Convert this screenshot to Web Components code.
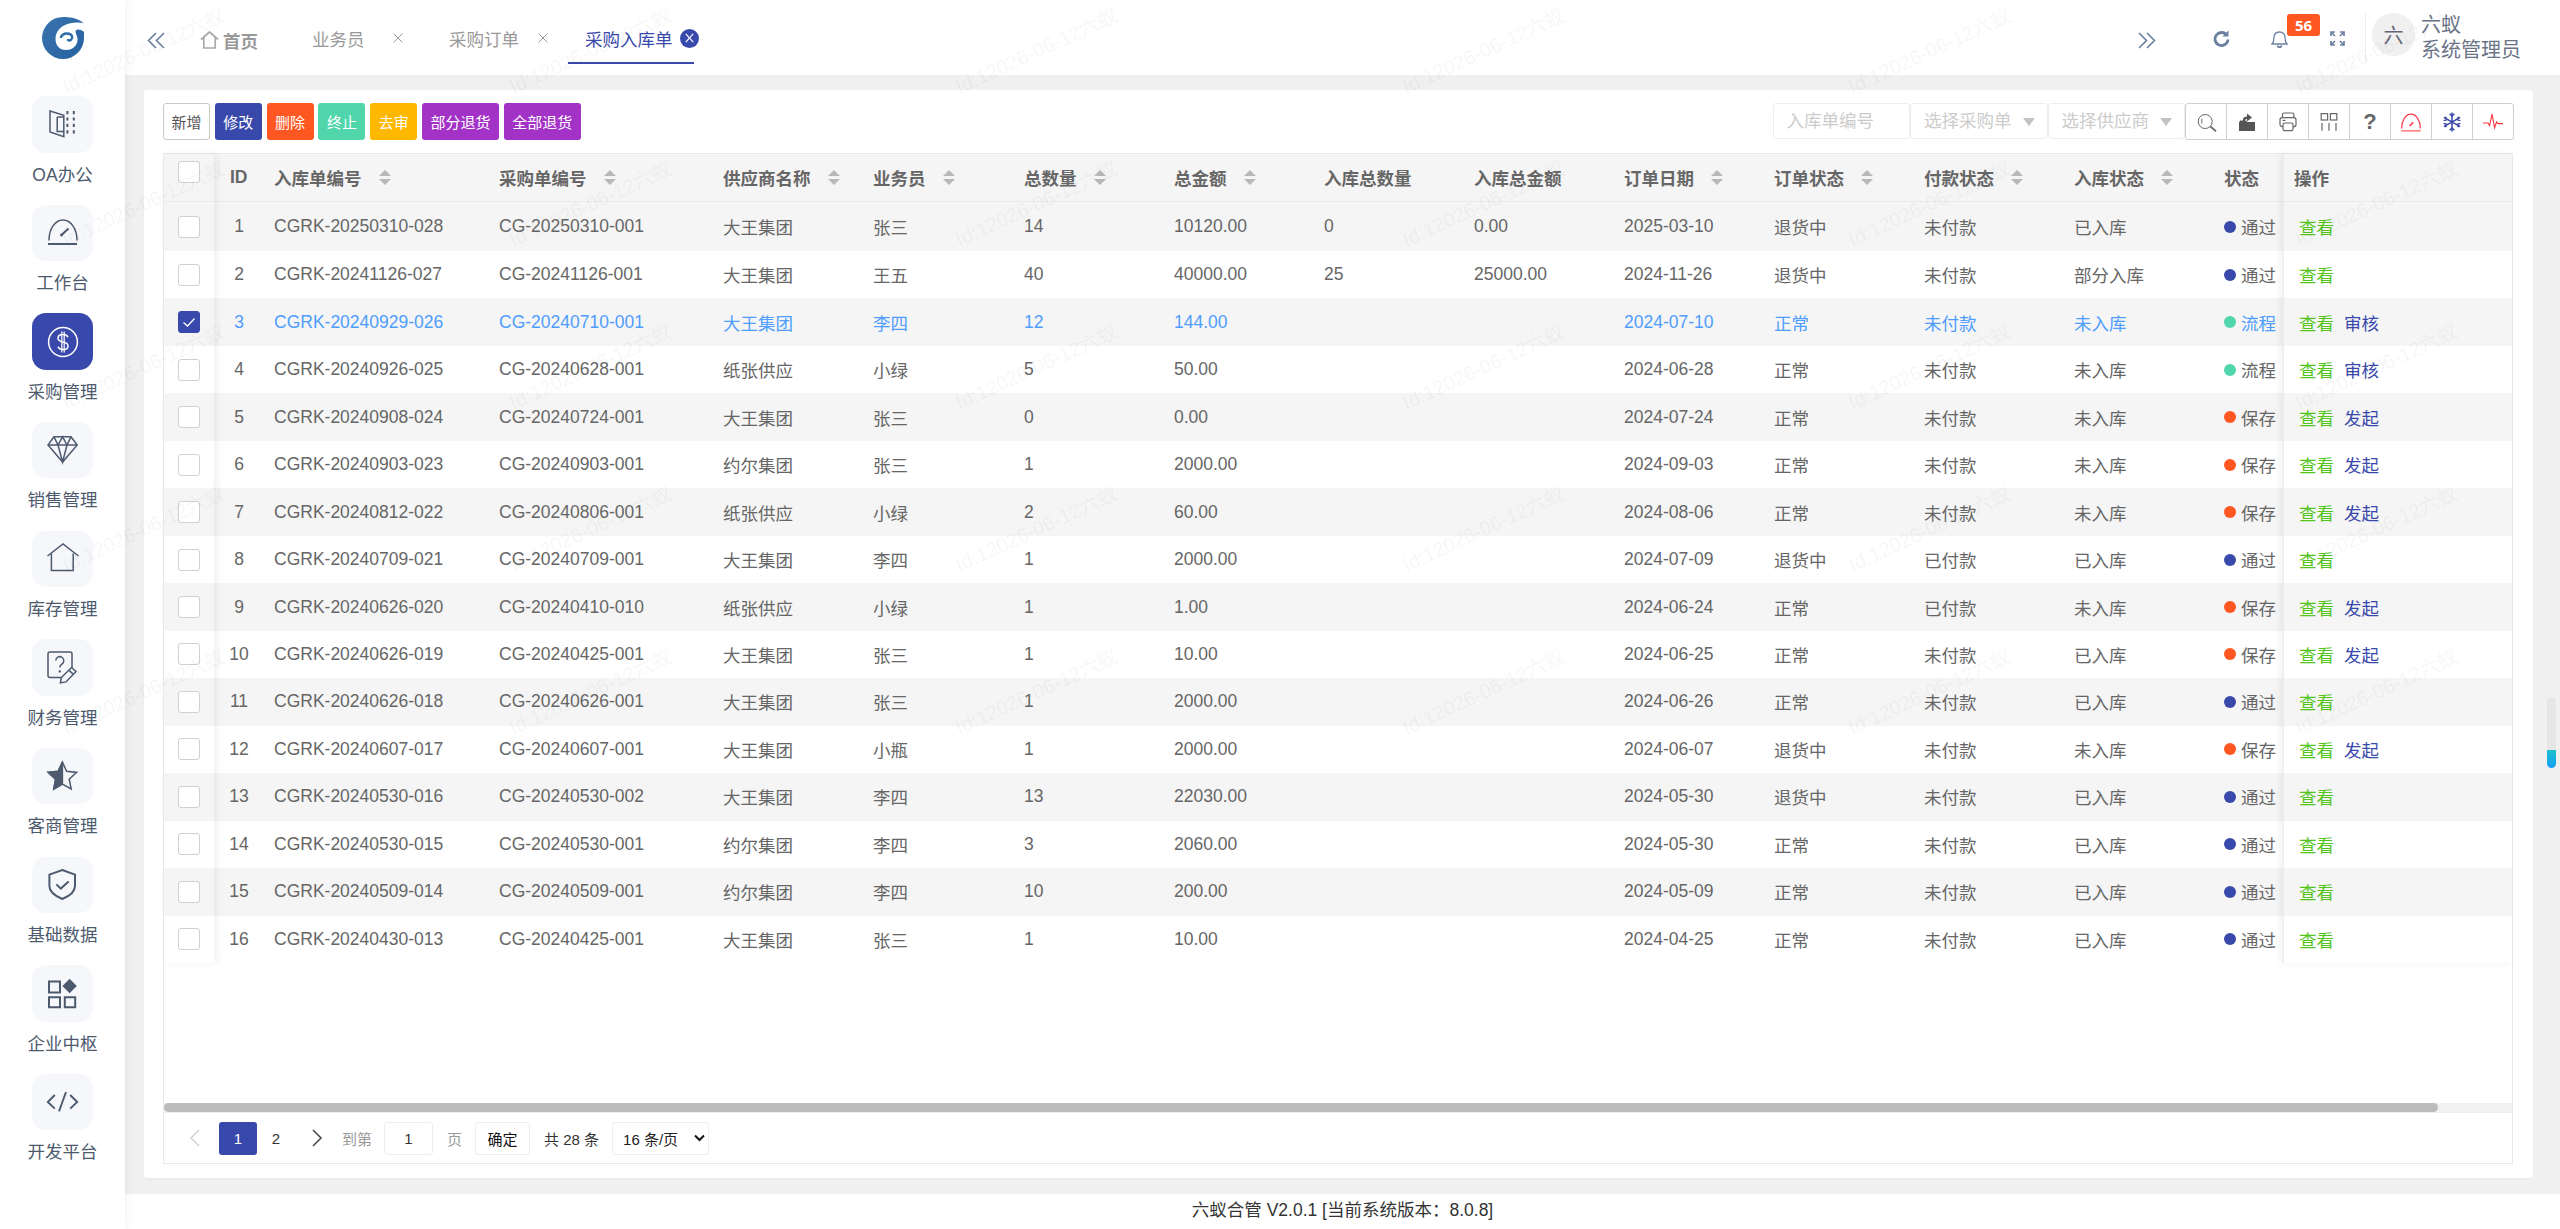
<!DOCTYPE html>
<html lang="zh-CN">
<head>
<meta charset="utf-8">
<title>采购入库单</title>
<style>
  html, body { margin: 0; height: 100%; overflow: hidden; background: #f0f0f0; }
  body { font-family: "Liberation Sans", "Noto Sans CJK SC", sans-serif; color: #666; }
</style>
</head>
<body>
<lx-shell>
  <lx-sidebar slot="side">
    <lx-nav-item icon="oa" label="OA办公"></lx-nav-item>
    <lx-nav-item icon="gauge" label="工作台"></lx-nav-item>
    <lx-nav-item icon="dollar" label="采购管理" active></lx-nav-item>
    <lx-nav-item icon="gem" label="销售管理"></lx-nav-item>
    <lx-nav-item icon="home" label="库存管理"></lx-nav-item>
    <lx-nav-item icon="doc" label="财务管理"></lx-nav-item>
    <lx-nav-item icon="star" label="客商管理"></lx-nav-item>
    <lx-nav-item icon="shield" label="基础数据"></lx-nav-item>
    <lx-nav-item icon="apps" label="企业中枢"></lx-nav-item>
    <lx-nav-item icon="code" label="开发平台"></lx-nav-item>
  </lx-sidebar>
  <lx-topbar slot="top"></lx-topbar>
  <lx-card>
    <lx-toolbar></lx-toolbar>
    <lx-table id="tabla"></lx-table>
  </lx-card>
  <lx-footer slot="foot">六蚁合管 V2.0.1 [当前系统版本：8.0.8]</lx-footer>
</lx-shell>
<lx-scroll-widget></lx-scroll-widget>
<lx-watermark></lx-watermark>

<script>
// iconos de la barra lateral, caja de 32x32
const NAV_ICONS = {
  oa: `<path d="M3 3l13.8 4.2v21.5L3 24z"/><path d="M10.2 9v14.6h6.6"/><path d="M10.2 9h6.6"/><path d="M20.4 3v25M26.8 3v25" stroke-dasharray="3.2 3.2" stroke-width="2"/>`,
  gauge: `<path d="M2 23.4C2 12 8 3 16 3s14 9 14 20.4" /><path d="M1 27h29" stroke-width="2"/><path d="M14.5 18l7-6.5" stroke-width="2"/><circle cx="14.5" cy="18" r="1.4" fill="currentColor" stroke="none"/>`,
  dollar: `<circle cx="16" cy="16" r="14.4"/><path d="M21 11.3c-.8-1.8-2.6-2.8-5-2.8-3 0-5 1.5-5 3.7 0 2.3 2 3.2 5 3.8 3 .6 5 1.6 5 3.9 0 2.2-2 3.7-5 3.7-2.4 0-4.2-1-5-2.8"/><path d="M14.800 5.500v21M17.200 5.500v21" stroke-width="1.200"/>`,
  gem: `<path d="M7 2.800h17L30.200 11 15.600 28 1 11z"/><path d="M1 11h29.200M7 2.800 11 11l4.600 17L20 11l4-8.200M11 11l4.600-8.200L20 11"/>`,
  home: `<path d="M.5 13 16 1l15.500 12"/><path d="M4.400 10.500V27.500h21.800V10.500"/>`,
  doc: `<path d="M14 25.400H3a2 2 0 0 1-2-2V2a2 2 0 0 1 2-2h20a2 2 0 0 1 2 2v14"/><path d="M8.800 8.600a4 4 0 1 1 6.200 3.400c-1.500 1-2.200 1.800-2.200 3.600"/><circle cx="12.800" cy="19.400" r="1.200" fill="currentColor" stroke="none"/><path d="M24.500 15.500l4.500 4-10 10.400-5.600 1 1-5.400z"/><path d="M22 18.400l4.500 4"/>`,
  star: `<path d="M15.400 2l4.200 9.200 10 1.200-7.400 6.800 2 9.800-8.800-5-8.600 5 1.800-9.800-7.400-6.800 10-1.200z" /><path d="M15.400 2l-4.200 9.200-10 1.200 7.400 6.800-1.800 9.800 8.600-5z" fill="currentColor"/>`,
  shield: `<path d="M15.300 1 28 5.600V17c0 5.800-4.600 9.600-12.700 13C7.200 26.600 2.400 22.800 2.400 17V5.600z" stroke-width="2"/><path d="M9.400 15.400l4.400 4.200 7.800-7.200" stroke-width="2"/>`,
  apps: `<path d="M2 3.500h11v11H2zM2 19.300h11v10H2zM17.800 19.300h10.400v10H17.800z" stroke-width="2"/><path d="M22.600.8 29.800 8l-7.200 7.200L15.400 8z" fill="currentColor" stroke="none"/>`,
  code: `<path d="M7.800 9 .8 16l7 6.600M23.200 9l7 7-7 6.600M19 6l-7 19.400" stroke-width="1.900"/>`
};

// iconos del grupo de herramientas, caja de 22x22
const TOOL_ICONS = [
  `<g fill="none" stroke="#666" stroke-width="1"><circle cx="10.200" cy="10.500" r="7"/><path d="M6.800 7.600v5" stroke-width=".9"/><path d="M15.500 15.500l5.500 4.800" stroke-width="1.700"/></g>`,
  `<path d="M3 11h16v9H3z" fill="#565656"/><path d="M3 12.200V20h15.800v-8.200h-7L10 9.600H4z" fill="#565656"/><path d="M7 11V8.400c0-2 1.600-3 4-3V2.600l5 4-5 4V8c-1.800 0-2 1-2 3z" fill="#565656"/>`,
  `<g fill="none" stroke="#666" stroke-width="1.200"><path d="M5.500 6.400V3.600c0-1 .6-1.600 1.600-1.600h8.200c1 0 1.600.6 1.600 1.600v2.800"/><rect x="3" y="6.600" width="16" height="9" rx="2.200" /><rect x="6" y="12" width="10" height="7.600" rx="1.600" fill="#fff"/><path d="M5.500 9.400h3" /></g>`,
  `<g fill="none" stroke="#666" stroke-width="1.200"><rect x="3.200" y="2.600" width="6.400" height="6.400"/><rect x="12.400" y="2.600" width="6.400" height="6.400"/><path d="M4 12v7.800M11 12v7.800M18 12v7.800"/></g>`,
  null,
  `<g fill="none" stroke="#ff3c4e" stroke-width="1.200"><path d="M1.600 17.400C1.600 9.600 5.600 3.200 11 3.200s9.400 6.400 9.400 14.200"/><path d="M1.200 19.800h19.600" stroke="#ff8a8a" stroke-width="1.800"/><path d="M9.600 15l3.600-3.600" stroke-width="1.600"/></g>`,
  `<g fill="none" stroke="#3949ab" stroke-width="1.500"><path d="M11 1.600v18.800M2.800 6.300l16.400 9.400M19.200 6.300 2.800 15.700"/><path d="M8.600 2.800l2.400 2.200 2.400-2.200M8.600 19.200l2.400-2.200 2.400 2.200M2.600 9.600l3-.8-1-3M19.400 9.600l-3-.8 1-3M2.600 12.400l3 .8-1 3M19.400 12.400l-3 .8 1 3"/></g>`,
  `<path d="M1 12h5l1.600 2.600L10 3.200l2.600 13.600 2-6 1.600 1.800h4.800" fill="none" stroke="#f5323c" stroke-width="1.100"/>`
];

const css_base = `* { box-sizing: border-box; } :host { box-sizing: border-box; }`;

class LxShell extends HTMLElement {
  constructor() {
    super();
    this.attachShadow({ mode: 'open' });
    this.shadowRoot.innerHTML = `
      <style>
        ${css_base}
        :host { display: flex; height: 1229px; width: 2560px; }
        main { flex: 1; min-width: 0; display: flex; flex-direction: column; }
        .contenido { flex: 1; min-height: 0; display: flex; padding: 15px 27px 16px 19px; background: #f0f0f0; }
      </style>
      <slot name="side"></slot>
      <main>
        <slot name="top"></slot>
        <div class="contenido"><slot></slot></div>
        <slot name="foot"></slot>
      </main>`;
  }
}

class LxSidebar extends HTMLElement {
  constructor() {
    super();
    this.attachShadow({ mode: 'open' });
    this.shadowRoot.innerHTML = `
      <style>
        ${css_base}
        :host { display: block; width: 125px; flex: none; background: #fff; box-shadow: 2px 0 8px rgba(0,0,0,.05); position: relative; z-index: 2; }
        .logo { height: 96px; padding-top: 17px; display: flex; justify-content: center; }
        svg { width: 42px; height: 42px; display: block; }
      </style>
      <div class="logo">
        <svg viewBox="0 0 42 42">
          <defs><linearGradient id="g" x1="0" y1="0" x2="1" y2="1"><stop offset="0" stop-color="#3a75b0"/><stop offset="1" stop-color="#26609f"/></linearGradient></defs>
          <path d="M21 0C30 0 37 2 42 6.500L42 21A21 21 0 1 1 21 0z" fill="url(#g)"/>
          <path d="M43 6.500C32 3.500 17 7 14 18 12 26 16 33 24 33c7 0 12-5 11.500-11C35 17 31 13 36 12.500c2 0 5 1 7 3.500z" fill="#fff"/>
          <path d="M19 20C21 15.500 28 15.500 30 19 31 22 28 24.500 26 23" fill="none" stroke="#2f6ca8" stroke-width="2.400" stroke-linecap="round"/>
        </svg>
      </div>
      <slot></slot>`;
  }
}

class LxNavItem extends HTMLElement {
  connectedCallback() {
    if (this.shadowRoot) return;
    this.attachShadow({ mode: 'open' });
    const activo = this.hasAttribute('active');
    this.shadowRoot.innerHTML = `
      <style>
        ${css_base}
        :host { display: block; height: 108.670px; }
        .tile { width: 61px; height: 56.500px; margin: 0 auto; border-radius: 14px; background: ${activo ? '#3949ab' : '#f5f7fb'};
                color: ${activo ? '#fff' : '#4d5a6e'}; display: flex; align-items: center; justify-content: center; }
        svg { width: 32px; height: 32px; overflow: visible; fill: none; stroke: currentColor; stroke-width: 1.500; }
        .label { margin-top: 10px; height: 24px; line-height: 24px; text-align: center; font-size: 17.500px; color: #4d5a6e; white-space: nowrap; }
      </style>
      <div class="tile"><svg viewBox="0 0 32 32">${NAV_ICONS[this.getAttribute('icon')]}</svg></div>
      <div class="label">${this.getAttribute('label')}</div>`;
  }
}

class LxTopbar extends HTMLElement {
  constructor() {
    super();
    this.attachShadow({ mode: 'open' });
    const aspa = `<svg width="10" height="10" viewBox="0 0 10 10" stroke="#999" stroke-width="1"><path d="M.5.5l9 9M9.500.5l-9 9"/></svg>`;
    this.shadowRoot.innerHTML = `
      <style>
        ${css_base}
        :host { display: flex; align-items: flex-start; height: 75px; background: #fff; font-size: 17.500px; flex: none; }
        svg { display: block; fill: none; flex: none; }
        .fold { stroke: #6b80a0; stroke-width: 1.600; width: 19px; height: 17px; margin-top: 32px; }
        .home { display: flex; align-items: center; height: 20px; margin: 30px 0 0 34px; width: 95px; flex: none; font-weight: 700; color: #999; gap: 4px; }
        .home svg { stroke: #aaa; stroke-width: 1.700; width: 19px; height: 20px; }
        .tab { display: flex; align-items: center; height: 47px; margin-top: 17px; padding: 0 0 3px 17px; border-bottom: 2px solid transparent; color: #999; flex: none; white-space: nowrap; }
        .tab.on { color: #3949ab; border-color: #3949ab; width: 126px; }
        .cerrar { width: 19px; height: 19px; margin-left: 7px; flex: none; background: #3949ab; border-radius: 50%; display: flex; align-items: center; justify-content: center; }
        .der { margin-left: auto; display: flex; align-items: flex-start; height: 75px; padding-right: 39px; }
        .der svg { stroke: #6b80a0; }
        .bell { position: relative; margin: 30px 0 0 41px; width: 17px; height: 18px; }
        .badge { position: absolute; left: 16px; top: -16px; width: 33px; height: 22px; background: #ff5722; border-radius: 3px; color: #fff; font: 700 15px/22px "Noto Sans", sans-serif; text-align: center; }
        .vr { width: 1px; height: 50px; background: #eee; margin: 13px 0 0 20px; }
        .avatar { width: 43px; height: 43px; border-radius: 50%; background: #f0f0f0; margin: 13px 0 0 6px; color: #667; font-size: 20px; display: flex; align-items: center; justify-content: center; }
        .nombre { margin: 13px 0 0 6px; font-size: 20px; line-height: 25px; color: #6a7487; white-space: nowrap; }
      </style>
      <svg class="fold" style="margin-left:22px" viewBox="0 0 19 17"><path d="M9 1 1.500 8.500 9 16M17 1 9.500 8.500 17 16"/></svg>
      <div class="home"><svg viewBox="0 0 19 20"><path d="M1 9.500 9.500 2 18 9.500M3.800 7.500V18h11.400V7.500"/></svg><span>首页</span></div>
      <div class="tab" style="width:137px"><span>业务员</span><span style="margin-left:28px">${aspa}</span></div>
      <div class="tab" style="width:136px"><span>采购订单</span><span style="margin-left:19px">${aspa}</span></div>
      <div class="tab on"><span>采购入库单</span><span class="cerrar"><svg width="9" height="10" viewBox="0 0 9 10" stroke="#fff" stroke-width="1.200"><path d="M.8.8l7.400 8.400M8.200.8.8 9.200"/></svg></span></div>
      <div class="der">
        <svg class="fold" viewBox="0 0 19 17"><path d="M2 1l7.500 7.500L2 16M10 1l7.500 7.500L10 16"/></svg>
        <svg style="margin:30px 0 0 57px;stroke-width:2.800" width="17" height="17" viewBox="0 0 17 17"><path d="M14 5.500A6.500 6.500 0 1 0 15 9.500"/><path d="M15.500 .5v6h-6z" fill="#6b80a0" stroke="none"/></svg>
        <div class="bell"><svg width="17" height="18" viewBox="0 0 17 18" style="stroke-width:1.300"><path d="M1 14h15c-1.500-1.500-2-3-2-6.500C14 4 11.800 2 8.500 2S3 4 3 7.500C3 11 2.500 12.500 1 14z"/><path d="M6.500 15.500c.3 1.300 1 1.800 2 1.800s1.700-.5 2-1.800" stroke-width="1.800"/></svg><span class="badge">56</span></div>
        <svg style="margin:31px 0 0 42px;stroke-width:1.700" width="15" height="15" viewBox="0 0 15 15"><path d="M1 5V1h4M10 1h4v4M14 10v4h-4M5 14H1v-4M1.500 1.500 5 5M13.500 1.500 10 5M13.500 13.500 10 10M1.500 13.500 5 10"/></svg>
        <div class="vr"></div>
        <div class="avatar">六</div>
        <div class="nombre">六蚁<br>系统管理员</div>
      </div>`;
  }
}

class LxCard extends HTMLElement {
  constructor() {
    super();
    this.attachShadow({ mode: 'open' });
    this.shadowRoot.innerHTML = `
      <style>
        ${css_base}
        :host { flex: 1; min-width: 0; display: flex; flex-direction: column; gap: 13px; padding: 13px 20px 14px 19px; background: #fff; border-radius: 3px; box-shadow: 0 1px 2px rgba(0,0,0,.04); }
      </style>
      <slot></slot>`;
  }
}

class LxToolbar extends HTMLElement {
  constructor() {
    super();
    this.attachShadow({ mode: 'open' });
    const botones = [['新增', 'blanco'], ['修改', '#3949ab'], ['删除', '#ff5722'], ['终止', '#51d5ab'], ['去审', '#ffb800'], ['部分退货', '#a233c6'], ['全部退货', '#a233c6']];
    const btnHtml = botones.map(([t, c]) => c === 'blanco'
      ? `<button class="blanco">${t}</button>`
      : `<button style="background:${c}">${t}</button>`).join('');
    const herramientas = TOOL_ICONS.map(s => s
      ? `<div class="cell"><svg width="22" height="22" viewBox="0 0 22 22">${s}</svg></div>`
      : `<div class="cell q">?</div>`).join('');
    this.shadowRoot.innerHTML = `
      <style>
        ${css_base}
        :host { display: flex; height: 37px; flex: none; margin-right: -1px; }
        .izq { display: flex; gap: 4.800px; }
        button { height: 37px; width: 47px; padding: 0; border: 0; border-radius: 3px; color: #fff; font: 15px "Liberation Sans", "Noto Sans CJK SC", sans-serif; white-space: nowrap; }
        button:nth-child(n+6) { width: 77px; }
        button.blanco { background: #fff; border: 1px solid #c9c9c9; color: #555; }
        .der { margin-left: auto; display: flex; }
        .campo { width: 137.500px; height: 36px; border: 1px solid #eee; border-radius: 3px; padding-left: 13px; font-size: 17.500px; line-height: 34px; color: #ccc; position: relative; white-space: nowrap; }
        .campo.sel::after { content: ""; position: absolute; right: 12px; top: 14px; border: 6.500px solid transparent; border-top: 8px solid #c2c2c2; border-bottom: 0; }
        .grupo { display: flex; height: 37px; border: 1px solid #cfcfcf; border-radius: 3px; }
        .cell { width: 41px; display: flex; align-items: center; justify-content: center; border-left: 1px solid #cfcfcf; }
        .cell:first-child { border-left: 0; width: 40px; }
        .q { font: 700 22px "Liberation Sans", sans-serif; color: #666; }
      </style>
      <div class="izq">${btnHtml}</div>
      <div class="der">
        <div class="campo">入库单编号</div>
        <div class="campo sel">选择采购单</div>
        <div class="campo sel">选择供应商</div>
        <div class="grupo">${herramientas}</div>
      </div>`;
  }
}

class LxTable extends HTMLElement {
  constructor() {
    super();
    this.attachShadow({ mode: 'open' });
    this._filas = [];
  }

  set data(filas) {
    this._filas = filas;
    this.render();
  }

  render() {
    const cols = [
      ['ID', 50], ['入库单编号', 225, 's'], ['采购单编号', 224, 's'], ['供应商名称', 150, 's'], ['业务员', 151, 's'],
      ['总数量', 150, 's'], ['总金额', 150, 's'], ['入库总数量', 150], ['入库总金额', 150], ['订单日期', 150, 's'],
      ['订单状态', 150, 's'], ['付款状态', 150, 's'], ['入库状态', 150, 's'], ['状态', 150]
    ];
    const plantilla = cols.map(c => c[1] + 'px').join(' ');
    const puntos = { '通过': '#3949ab', '流程': '#51d5ab', '保存': '#ff5722' };
    const flecha = `<i class="sort"></i>`;

    const cabecera = `<div class="fila head">${cols.map((c, i) =>
      `<div class="td${i === 0 ? ' id' : ''}"><span>${c[0]}</span>${c[2] ? flecha : ''}</div>`).join('')}</div>`;

    const filas = this._filas.map(f => {
      const celdas = [f.id, f.entrada, f.compra, f.proveedor, f.vendedor, f.cantidad, f.importe, f.cantEntrada, f.impEntrada, f.fecha, f.orden, f.pago, f.almacen];
      return `<div class="fila${f.sel ? ' sel' : ''}">${celdas.map((t, i) => `<div class="td${i === 0 ? ' id' : ''}">${t ?? ''}</div>`).join('')}
        <div class="td"><i class="dot" style="background:${puntos[f.estado]}"></i>${f.estado}</div></div>`;
    }).join('');

    const izq = this._filas.map(f => `<div class="fila"><i class="chk${f.sel ? ' on' : ''}">${f.sel ? '<svg width="14" height="14" viewBox="0 0 14 14"><path d="M1.500 7.500 5.500 11 12.500 3.500" fill="none" stroke="#fff" stroke-width="1.300"/></svg>' : ''}</i></div>`).join('');

    const der = this._filas.map(f => `<div class="fila"><div class="td ops"><a class="ver">查看</a>${f.accion ? `<a class="acc">${f.accion}</a>` : ''}</div></div>`).join('');

    this.shadowRoot.innerHTML = `
      <style>
        ${css_base}
        :host { flex: 1; min-height: 0; display: flex; flex-direction: column; border: 1px solid #e9e9e9; font-size: 17.500px; color: #666; }
        .cuerpo { flex: 1; min-height: 0; display: flex; align-items: flex-start; }
        .pane { flex: none; background: #fff; position: relative; z-index: 1; }
        .izq { width: 50px; box-shadow: 3px 0 7px rgba(0,0,0,.06); }
        .der { width: 229px; border-left: 1px solid #ececec; box-shadow: -3px 0 7px rgba(0,0,0,.06); }
        .centro { flex: 1; min-width: 0; overflow: hidden; }
        .fila { height: 47.470px; display: flex; align-items: center; background: #fff; }
        .centro .fila { display: grid; grid-template-columns: ${plantilla}; }
        .fila:nth-child(even) { background: #f5f5f5; }
        .fila:nth-child(2) { height: 49px; }
        .fila.head { height: 48px !important; background: #f5f5f5; border-bottom: 1px solid #eaeaea; font-weight: 700; }
        .td { padding-left: 10px; white-space: nowrap; display: flex; align-items: center; min-width: 0; }
        .td.id { justify-content: center; padding-left: 0; }
        .head .td.id { justify-content: flex-start; padding-left: 16px; }
        .sel { color: #4e9dff; }
        .dot { width: 12px; height: 12px; border-radius: 50%; margin-right: 5px; flex: none; }
        .sort { display: inline-block; width: 12px; height: 15px; margin-left: 17px; position: relative; flex: none; }
        .sort::before, .sort::after { content: ""; position: absolute; left: 0; border: 6px solid transparent; }
        .sort::before { top: 0; border-top: 0; border-bottom: 6.500px solid #b8b8b8; }
        .sort::after { bottom: 0; border-bottom: 0; border-top: 6.500px solid #b8b8b8; }
        .chk { display: block; width: 22px; height: 22px; margin-left: 14px; border: 1px solid #d0d0d0; border-radius: 3px; background: #fff; flex: none; }
        .chk.on { background: #3949ab; border-color: #3949ab; display: flex; align-items: center; justify-content: center; }
        .head .chk { margin-bottom: 11px; }
        .der .head .td { padding-left: 10px; }
        .ops { padding-left: 15px; gap: 10px; }
        .ver { color: #52c41a; }
        .acc { color: #3949ab; }
        .barra { height: 9px; flex: none; background: #f1f1f1; }
        .thumb { width: 2274px; height: 9px; background: #bcbcbc; border-radius: 5px; }
      </style>
      <div class="cuerpo">
        <div class="pane izq"><div class="fila head"><i class="chk"></i></div>${izq}</div>
        <div class="centro">${cabecera}${filas}</div>
        <div class="pane der"><div class="fila head"><div class="td">操作</div></div>${der}</div>
      </div>
      <div class="barra"><div class="thumb"></div></div>
      <lx-pager></lx-pager>`;
  }
}

class LxPager extends HTMLElement {
  constructor() {
    super();
    this.attachShadow({ mode: 'open' });
    this.shadowRoot.innerHTML = `
      <style>
        ${css_base}
        :host { display: flex; align-items: center; height: 51px; flex: none; border-top: 1px solid #eee; padding-left: 12px; font-size: 15px; color: #333; white-space: nowrap; }
        .p { width: 38px; height: 33px; display: flex; align-items: center; justify-content: center; flex: none; border-radius: 3px; }
        .on { background: #3949ab; color: #fff; }
        svg { fill: none; }
        .gris { color: #999; }
        .caja { height: 33px; border: 1px solid #eee; border-radius: 3px; display: flex; align-items: center; justify-content: center; background: #fff; }
      </style>
      <div class="p" style="margin-right:5px"><svg width="12" height="20" viewBox="0 0 12 20" stroke="#d2d2d2" stroke-width="1.500"><path d="M10 2 2 10l8 8"/></svg></div>
      <div class="p on">1</div>
      <div class="p">2</div>
      <div class="p" style="margin-left:3px"><svg width="12" height="20" viewBox="0 0 12 20" stroke="#444" stroke-width="1.500"><path d="M2 2l8 8-8 8"/></svg></div>
      <span class="gris" style="margin-left:6px">到第</span>
      <div class="caja" style="width:49px;margin-left:12px;color:#333">1</div>
      <span class="gris" style="margin-left:14px">页</span>
      <div class="caja" style="width:55px;margin-left:13px;color:#111">确定</div>
      <span style="margin-left:14px">共 28 条</span>
      <div class="caja" style="width:97px;margin-left:13px;color:#222;justify-content:flex-start;padding-left:10px;gap:16px">16 条/页<svg width="11" height="8" viewBox="0 0 11 8" stroke="#111" stroke-width="2"><path d="M1 1.500 5.500 6 10 1.500"/></svg></div>`;
  }
}

class LxFooter extends HTMLElement {
  constructor() {
    super();
    this.attachShadow({ mode: 'open' });
    this.shadowRoot.innerHTML = `
      <style>
        :host { display: block; height: 35px; flex: none; background: #fff; text-align: center; font-size: 17.500px; line-height: 33px; color: #333; }
      </style>
      <slot></slot>`;
  }
}

// marca de agua encima de toda la pagina, cinco filas como en la captura
class LxWatermark extends HTMLElement {
  constructor() {
    super();
    this.attachShadow({ mode: 'open' });
    const celda = `<div><span>Id:12026-06-12六蚁</span></div>`;
    this.shadowRoot.innerHTML = `
      <style>
        :host { position: fixed; inset: 0; overflow: hidden; pointer-events: none; z-index: 10; }
        .rejilla { display: grid; grid-template-columns: repeat(6, 446.500px); grid-auto-rows: 162.500px; margin: -41px 0 0 -80px; }
        .rejilla div { display: flex; align-items: center; justify-content: center; }
        .rejilla div:nth-child(-n+6) { padding-top: 18px; }
        span { transform: rotate(-24.700deg); font-size: 20px; color: rgba(0,0,0,.035); white-space: nowrap; }
      </style>
      <div class="rejilla">${celda.repeat(30)}</div>`;
  }
}

class LxScrollWidget extends HTMLElement {
  constructor() {
    super();
    this.attachShadow({ mode: 'open' });
    this.shadowRoot.innerHTML = `
      <style>
        :host { position: fixed; left: 2547px; top: 697px; width: 9px; height: 71px; border-radius: 5px; background: #e6e6e6; overflow: hidden; z-index: 5; }
        div { margin-top: 53px; height: 18px; background: linear-gradient(#1ac0c8, #1a9cf5); }
      </style>
      <div></div>`;
  }
}

customElements.define('lx-shell', LxShell);
customElements.define('lx-sidebar', LxSidebar);
customElements.define('lx-nav-item', LxNavItem);
customElements.define('lx-topbar', LxTopbar);
customElements.define('lx-card', LxCard);
customElements.define('lx-toolbar', LxToolbar);
customElements.define('lx-pager', LxPager);
customElements.define('lx-table', LxTable);
customElements.define('lx-footer', LxFooter);
customElements.define('lx-watermark', LxWatermark);
customElements.define('lx-scroll-widget', LxScrollWidget);

const fila = (id, entrada, compra, proveedor, vendedor, cantidad, importe, fecha, orden, pago, almacen, estado, accion, extra) =>
  ({ id, entrada, compra, proveedor, vendedor, cantidad, importe, fecha, orden, pago, almacen, estado, accion, ...extra });

document.getElementById('tabla').data = [
  fila(1, 'CGRK-20250310-028', 'CG-20250310-001', '大王集团', '张三', 14, '10120.00', '2025-03-10', '退货中', '未付款', '已入库', '通过', null, { cantEntrada: 0, impEntrada: '0.00' }),
  fila(2, 'CGRK-20241126-027', 'CG-20241126-001', '大王集团', '王五', 40, '40000.00', '2024-11-26', '退货中', '未付款', '部分入库', '通过', null, { cantEntrada: 25, impEntrada: '25000.00' }),
  fila(3, 'CGRK-20240929-026', 'CG-20240710-001', '大王集团', '李四', 12, '144.00', '2024-07-10', '正常', '未付款', '未入库', '流程', '审核', { sel: true }),
  fila(4, 'CGRK-20240926-025', 'CG-20240628-001', '纸张供应', '小绿', 5, '50.00', '2024-06-28', '正常', '未付款', '未入库', '流程', '审核'),
  fila(5, 'CGRK-20240908-024', 'CG-20240724-001', '大王集团', '张三', 0, '0.00', '2024-07-24', '正常', '未付款', '未入库', '保存', '发起'),
  fila(6, 'CGRK-20240903-023', 'CG-20240903-001', '约尔集团', '张三', 1, '2000.00', '2024-09-03', '正常', '未付款', '未入库', '保存', '发起'),
  fila(7, 'CGRK-20240812-022', 'CG-20240806-001', '纸张供应', '小绿', 2, '60.00', '2024-08-06', '正常', '未付款', '未入库', '保存', '发起'),
  fila(8, 'CGRK-20240709-021', 'CG-20240709-001', '大王集团', '李四', 1, '2000.00', '2024-07-09', '退货中', '已付款', '已入库', '通过'),
  fila(9, 'CGRK-20240626-020', 'CG-20240410-010', '纸张供应', '小绿', 1, '1.00', '2024-06-24', '正常', '已付款', '未入库', '保存', '发起'),
  fila(10, 'CGRK-20240626-019', 'CG-20240425-001', '大王集团', '张三', 1, '10.00', '2024-06-25', '正常', '未付款', '已入库', '保存', '发起'),
  fila(11, 'CGRK-20240626-018', 'CG-20240626-001', '大王集团', '张三', 1, '2000.00', '2024-06-26', '正常', '未付款', '已入库', '通过'),
  fila(12, 'CGRK-20240607-017', 'CG-20240607-001', '大王集团', '小瓶', 1, '2000.00', '2024-06-07', '退货中', '未付款', '未入库', '保存', '发起'),
  fila(13, 'CGRK-20240530-016', 'CG-20240530-002', '大王集团', '李四', 13, '22030.00', '2024-05-30', '退货中', '未付款', '已入库', '通过'),
  fila(14, 'CGRK-20240530-015', 'CG-20240530-001', '约尔集团', '李四', 3, '2060.00', '2024-05-30', '正常', '未付款', '已入库', '通过'),
  fila(15, 'CGRK-20240509-014', 'CG-20240509-001', '约尔集团', '李四', 10, '200.00', '2024-05-09', '正常', '未付款', '已入库', '通过'),
  fila(16, 'CGRK-20240430-013', 'CG-20240425-001', '大王集团', '张三', 1, '10.00', '2024-04-25', '正常', '未付款', '已入库', '通过')
];
</script>
</body>
</html>
